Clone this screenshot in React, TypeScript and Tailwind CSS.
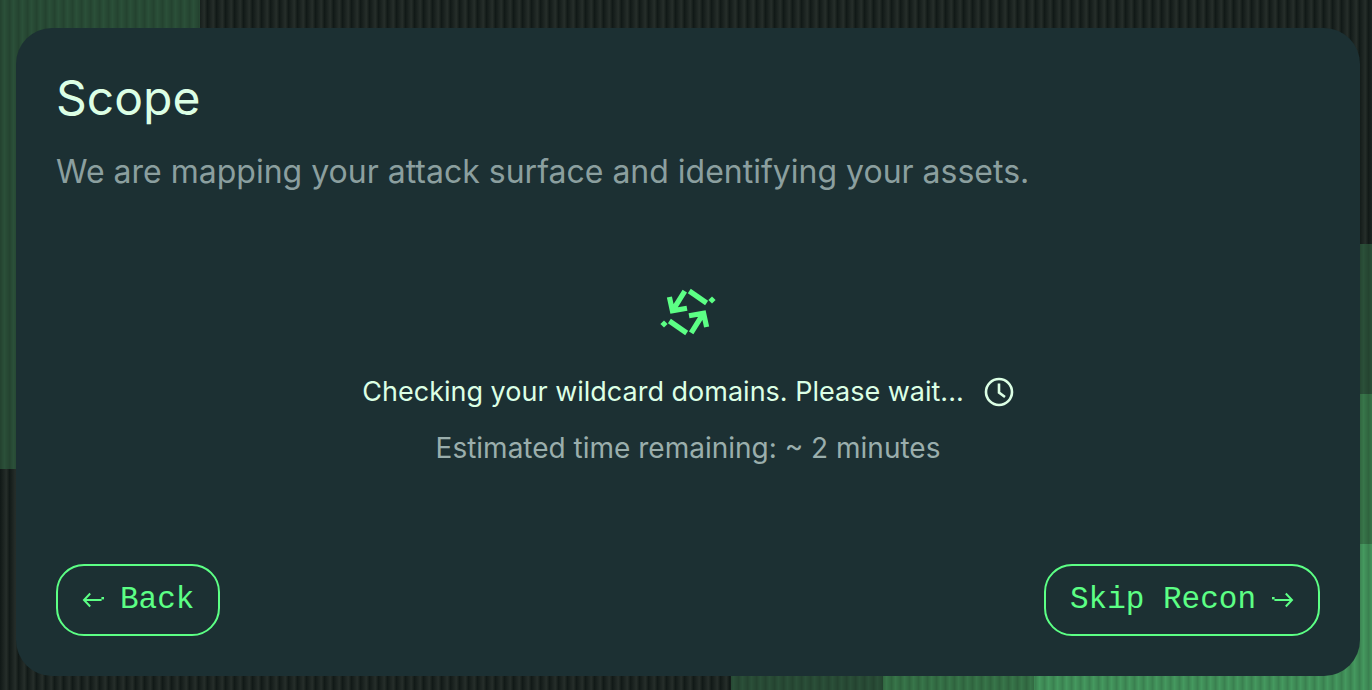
import React from "react";

function Backdrop() {
  return (
    <svg aria-hidden="true" className="absolute inset-0 h-full w-full" viewBox="0 0 1372 690" preserveAspectRatio="none">
      <defs>
        <linearGradient id="rib">
          <stop offset="0" stopColor="#101816" />
          <stop offset="0.4" stopColor="#1c2421" />
          <stop offset="0.7" stopColor="#262e2a" />
          <stop offset="1" stopColor="#151d1a" />
        </linearGradient>
        <linearGradient id="softRib">
          <stop offset="0" stopColor="#000" stopOpacity="0.18" />
          <stop offset="0.5" stopColor="#000" stopOpacity="0" />
          <stop offset="1" stopColor="#000" stopOpacity="0.14" />
        </linearGradient>
        <pattern id="dark" width="9" height="690" patternUnits="userSpaceOnUse">
          <rect width="9" height="690" fill="url(#rib)" />
        </pattern>
        <pattern id="ribs" width="9" height="690" patternUnits="userSpaceOnUse">
          <rect width="9" height="690" fill="url(#softRib)" />
        </pattern>
      </defs>
      <rect width="1372" height="690" fill="url(#dark)" />
      <path d="M0 0H200V469H0Z" fill="#2b5039" />
      <path d="M731 660H883V690H731ZM1340 244H1372V395H1340Z" fill="#2b5039" />
      <path d="M883 660H1034V690H883ZM1340 394H1372V544H1340Z" fill="#38764a" />
      <path d="M1034 544H1372V690H1034Z" fill="#45995f" />
      <path d="M0 0H200V469H0ZM731 660H1034V690H731ZM1034 544H1372V690H1034ZM1340 244H1372V544H1340Z" fill="url(#ribs)" />
    </svg>
  );
}

function SyncHalf() {
  return (
    <>
      <path d="M24.8 3.2L13 22M9.4 9L12.4 22.8L27 20.2" />
      <path d="M29.3 3L46.6 15" />
      <path d="M52 8.4L55.6 12L52 15.6L48.4 12Z" fill="#5cff85" stroke="none" />
    </>
  );
}

function SyncIcon() {
  return (
    <svg aria-hidden="true" viewBox="0 0 56 48" className="h-12 w-14" fill="none" stroke="#5cff85" strokeWidth="5.2">
      <SyncHalf />
      <g transform="rotate(180 28 24)">
        <SyncHalf />
      </g>
    </svg>
  );
}

function ClockIcon() {
  return (
    <svg aria-hidden="true" viewBox="0 0 30 30" className="size-[30px]" fill="none" stroke="#dcffe5" strokeWidth="2.6">
      <circle cx="15" cy="15" r="13" />
      <path d="M15 6.5V15.5L21 20" />
    </svg>
  );
}

function Arrow({ flipped = false }: { flipped?: boolean }) {
  return (
    <svg aria-hidden="true" viewBox="0 0 22 16" className={flipped ? "h-4 w-[22px] -scale-x-100" : "h-4 w-[22px]"} fill="none" stroke="currentColor" strokeWidth="2">
      <path d="M8.2 1.5L2 8L8.2 14.5M2 8H19.6" />
      <path d="M19.4 5H22V7.4H19.4Z" fill="currentColor" stroke="none" />
    </svg>
  );
}

const buttonClass =
  "flex h-18 cursor-pointer items-center gap-4 rounded-[28px] border-2 border-[#5cff85] px-6 font-['Liberation_Mono',monospace] text-[31px] leading-9 text-[#5cff85]";

export default function App() {
  return (
    <div className="relative flex min-h-screen flex-col bg-[#1b2420] pt-7 pr-3 pb-3.5 pl-4 font-['Inter',sans-serif]">
      <Backdrop />
      <main className="relative flex grow flex-col rounded-[36px] bg-[#1c3033] p-10">
        <h1 className="text-[48px] leading-15 text-[#dcffe5]">Scope</h1>
        <p className="mt-5 text-[32px] leading-12 text-[#8b9f9f]">
          We are mapping your attack surface and identifying your assets.
        </p>
        <section aria-live="polite" className="flex grow flex-col items-center pt-[92px]">
          <SyncIcon />
          <div className="mt-8 flex items-center gap-5 text-[27px] leading-12 text-[#dcffe5]">
            <p>Checking your wildcard domains. Please wait...</p>
            <ClockIcon />
          </div>
          <p className="mt-2 text-[28px] leading-12 text-[#9aaeac]">Estimated time remaining: ~ 2 minutes</p>
        </section>
        <footer className="flex items-center justify-between">
          <button type="button" className={buttonClass}>
            <Arrow />
            Back
          </button>
          <button type="button" className={buttonClass}>
            Skip Recon
            <Arrow flipped />
          </button>
        </footer>
      </main>
    </div>
  );
}
